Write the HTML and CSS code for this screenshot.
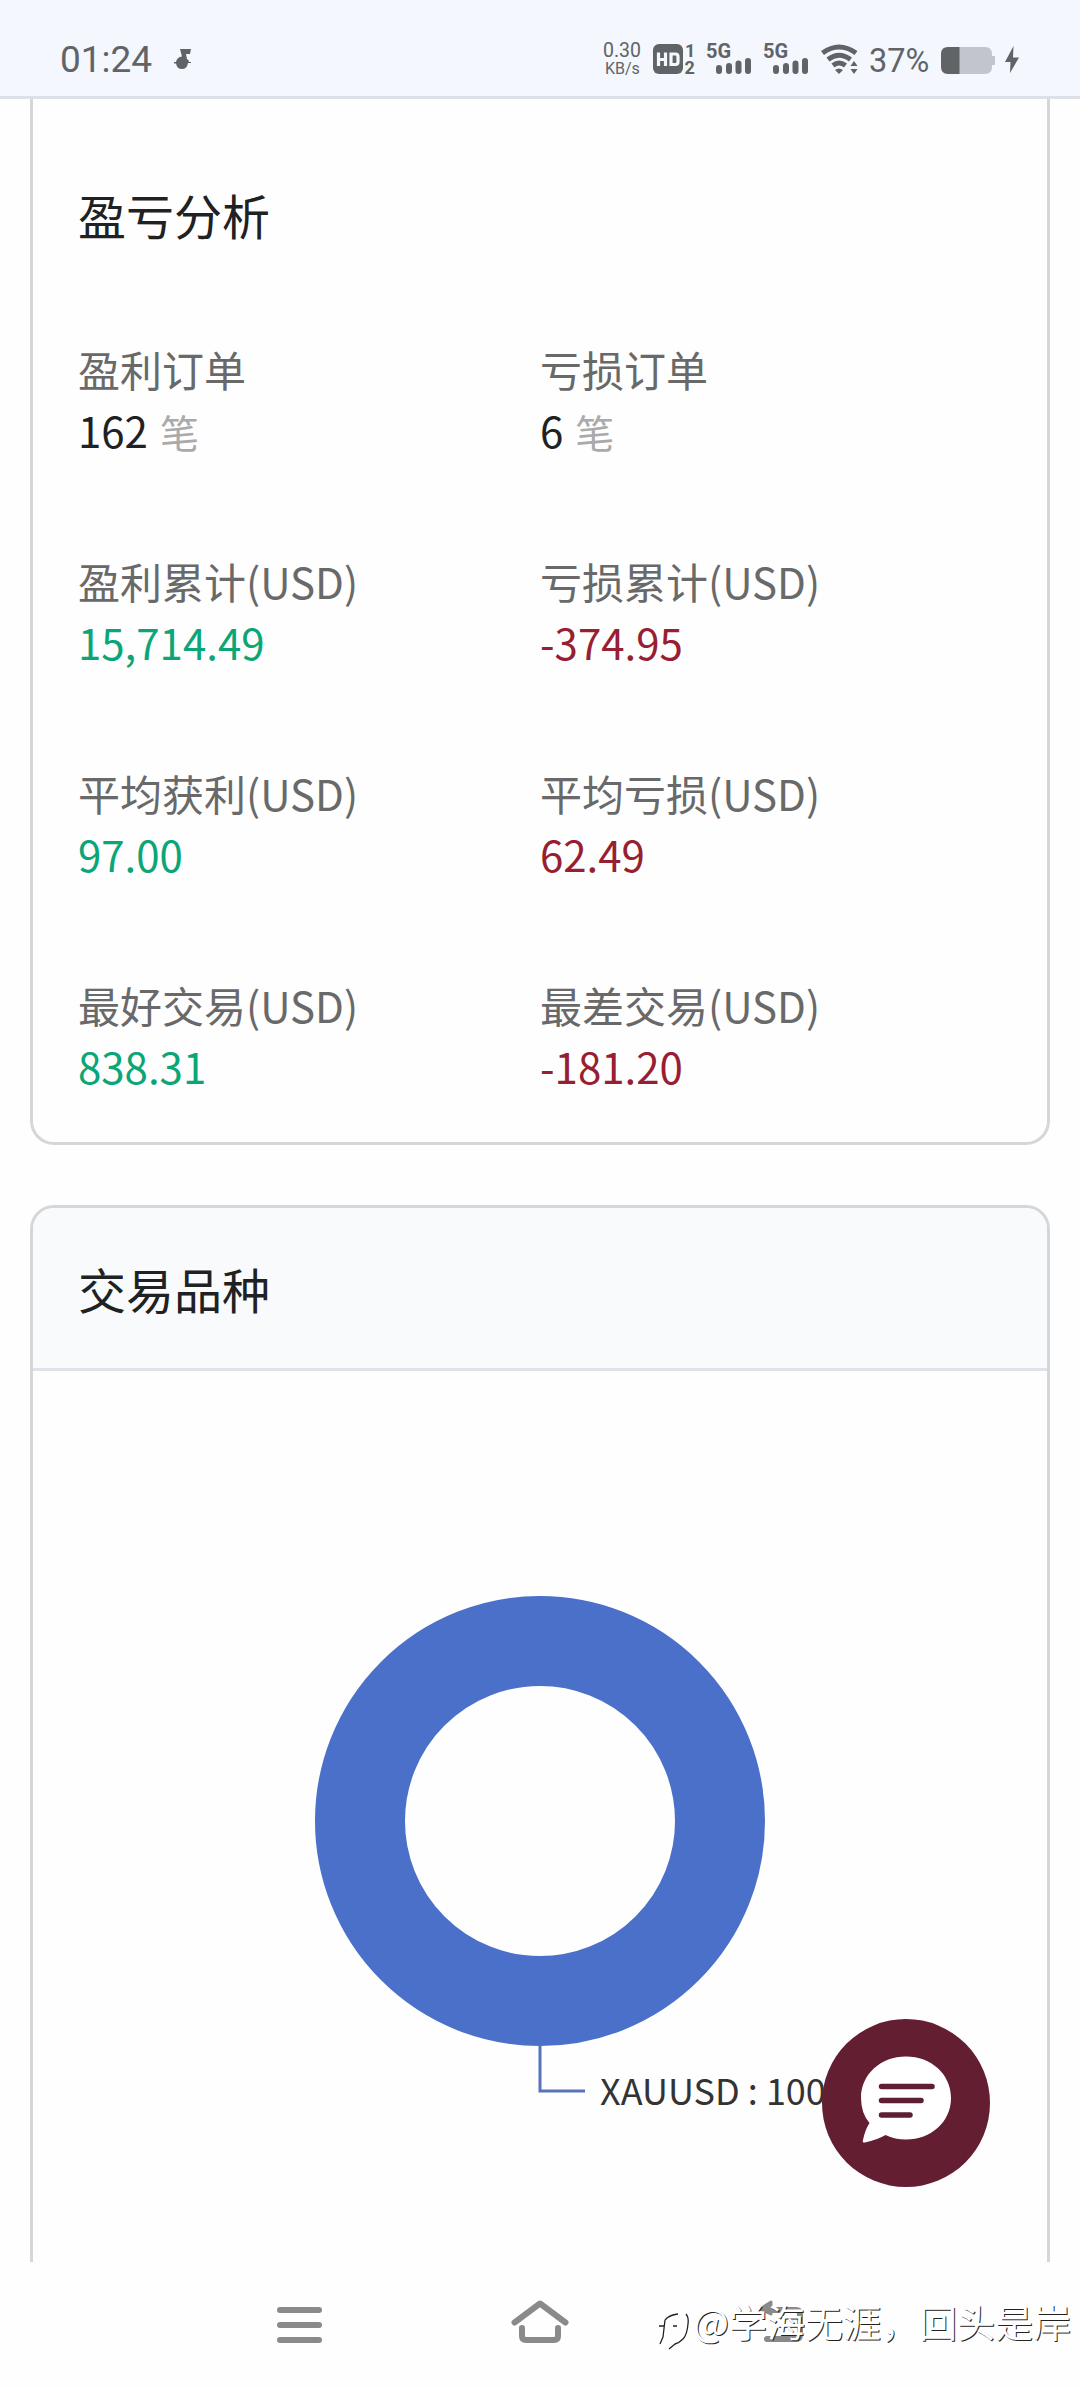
FILE: index.html
```html
<!DOCTYPE html>
<html lang="zh-CN">
<head>
<meta charset="utf-8">
<title>交易分析</title>
<link rel="stylesheet" href="styles.css">
</head>
<body>
<div class="screen">
  <header class="status">
    <span class="clock">01:24</span>
    <svg class="note" width="20" height="22" viewBox="0 0 20 22"><path d="M7 1H18L17 6H13L14 11Q16 12 16 14H18V15H15Q14 21 9 21Q4 21 3 15.500H1V14H3Q4 9 9 8.500Z"/></svg>
    <div class="indicators">
      <div class="speed"><span class="rate">0.30</span><span class="unit">KB/s</span></div>
      <svg class="hd" width="44" height="32" viewBox="0 0 44 32"><rect x="0" y="0" width="30" height="30" rx="6"/><path class="cut" d="M5.500 8.500V22M12.500 8.500V22M5.500 15.500H12.500M18 10H22.500Q25 10 25 12.500V18Q25 20.500 22.500 20.500H18Z"/><text x="32" y="12.500" class="sim">1</text><text x="31.500" y="30" class="sim">2</text></svg>
      <svg class="signal" width="46" height="32" viewBox="0 0 46 32"><text x="-1" y="14" class="net">5G</text><path d="M12 24V27M22 22V27M31.500 19.500V27M41 17V27" class="bars"/></svg>
      <svg class="signal" width="46" height="32" viewBox="0 0 46 32"><text x="-1" y="14" class="net">5G</text><path d="M12 24V27M22 22V27M31.500 19.500V27M41 17V27" class="bars"/></svg>
      <svg class="wifi" width="38" height="30" viewBox="0 0 38 30"><path d="M1.500 8Q18 -4 35 8M7 14.500Q18 6 29.500 14.500M12 20.500Q18 15.500 24.500 20.500" class="arc"/><path d="M14 25Q18 22 22 25L18 29ZM29.500 21L33 16L36.500 21ZM29.500 24H36.500L33 29Z"/></svg>
      <span class="percent">37%</span>
      <svg class="battery" width="54" height="28" viewBox="0 0 54 28"><path class="empty" d="M18 0H44Q51 0 51 7V9H54V18H51V20Q51 27 44 27H18Z"/><path d="M18.500 0H7Q0 0 0 7V20Q0 27 7 27H18.500Z"/></svg>
      <svg class="bolt" width="14" height="28" viewBox="0 0 14 28"><path d="M8.500 0L0 16H5.500L5 27L14 11.500H8Z"/></svg>
    </div>
  </header>

  <main class="page">
    <section class="card analysis">
      <h2 class="title">盈亏分析</h2>
      <dl class="stats">
        <div><dt>盈利订单</dt><dd>162<span class="count">笔</span></dd></div>
        <div><dt>亏损订单</dt><dd>6<span class="count">笔</span></dd></div>
        <div><dt>盈利累计(USD)</dt><dd class="gain">15,714.49</dd></div>
        <div><dt>亏损累计(USD)</dt><dd class="loss">-374.95</dd></div>
        <div><dt>平均获利(USD)</dt><dd class="gain">97.00</dd></div>
        <div><dt>平均亏损(USD)</dt><dd class="loss">62.49</dd></div>
        <div><dt>最好交易(USD)</dt><dd class="gain">838.31</dd></div>
        <div><dt>最差交易(USD)</dt><dd class="loss">-181.20</dd></div>
      </dl>
    </section>
    <section class="card symbols">
      <h2 class="title">交易品种</h2>
      <svg class="chart" width="1014" height="891" viewBox="0 0 1014 891">
        <circle cx="507" cy="450" r="180" class="ring"/>
        <path d="M507 675V720H552" class="leader"/>
        <text x="567" y="734" class="slice">XAUUSD : 100%</text>
      </svg>
    </section>
    <button class="chat" aria-label="客服">
      <svg width="168" height="168" viewBox="0 0 168 168"><path class="bubble" d="M84 37.500C109 37.500 129 55 129 79C129 103 109 120.500 84 120.500Q73 120.500 63.500 116Q55 121 43 123.500Q40 124 41 121Q43 111 47.500 104Q39 94 39 79C39 55 59 37.500 84 37.500Z"/><path class="lines" d="M59.500 67.500H110M59.500 81.500H99M59.500 96H88"/></svg>
    </button>
  </main>

  <nav class="navbar">
    <svg class="menu" width="45" height="36" viewBox="0 0 45 36"><path d="M3 3H42M3 18H42M3 33H42"/></svg>
    <svg class="home" width="58" height="44" viewBox="0 0 58 44"><path d="M3.500 22.500L29 3.500L54.500 22.500M11 28V36Q11 40 15 40H43Q47 40 47 36V28"/></svg>
    <svg class="back" width="46" height="44" viewBox="0 0 46 44"><path d="M8 39H37Q41 39 41 35V14Q41 10 37 10H8"/><path class="head" d="M1 9L12 2V14Z"/></svg>
    <div class="credit">
      <svg width="38" height="44" viewBox="0 0 38 44"><path class="light" d="M5 36Q9 30 9 16Q12 6 22 6Q31 6 31 17Q30 34 19 36L13 41"/><path class="shade" d="M10 13Q14 8 23 7M31 7Q34 11 33 17Q32 28 28 32Q24 36 20 37L14 42M4 19H9M10 13L8 30L5 37M18 19H22"/></svg>
      <span>@学海无涯，回头是岸</span>
    </div>
  </nav>
</div>
</body>
</html>
```
FILE: styles.css
```css
* { box-sizing: border-box; }
body { margin: 0; background: #fefefe; font-family: "Noto Sans CJK SC", sans-serif; color: #202122; }
h2, dl, dd { margin: 0; font-weight: 400; }
svg { display: block; flex: none; overflow: visible; }
.screen { width: 1080px; height: 2388px; display: flex; flex-direction: column; overflow: hidden; }

.status { flex: none; height: 99px; padding: 0 61px 0 60px; display: flex; align-items: flex-start; background: #f4f7fe; border-bottom: 3px solid #dce1e7; font-family: Roboto, sans-serif; color: #606466; fill: #606466; }
.clock { margin-top: 38px; font-size: 37px; line-height: 44px; width: 113px; }
.note { margin-top: 48px; }
.indicators { margin-left: auto; display: flex; }
.speed { width: 50px; margin-top: 40px; display: flex; flex-direction: column; }
.rate { font-size: 19.5px; line-height: 22px; }
.unit { font-size: 16px; line-height: 20px; margin-top: -3px; padding-left: 2px; }
.hd { margin: 44px 10px 0 0; }
.cut { fill: none; stroke: #f4f7fe; stroke-width: 3.2; }
.sim { font-size: 18px; font-weight: 700; }
.signal { margin: 44px 11px 0 0; }
.net { font-size: 20px; font-weight: 700; }
.bars { stroke: #606466; stroke-width: 6; stroke-linecap: round; }
.wifi { margin-top: 45px; }
.arc { fill: none; stroke: #606466; stroke-width: 5; }
.percent { margin: 42px 0 0 10px; width: 72px; font-size: 32.5px; line-height: 38px; }
.battery { margin-top: 47px; }
.empty { fill: #c2c5cd; }
.bolt { margin: 46px 0 0 10px; }

.page { flex: none; height: 2163px; padding: 0 30px; position: relative; overflow: hidden; }
.card { border: 3px solid #d4d7da; border-radius: 24px; overflow: hidden; }
.title { font-size: 48px; line-height: 72px; padding-left: 45px; }
.analysis { height: 1046px; border-top: 0; border-radius: 0 0 24px 24px; padding-top: 79px; }
.stats { display: grid; grid-template-columns: 462px 1fr; row-gap: 91px; padding: 89px 0 0 45px; font-size: 42px; line-height: 60px; }
dt { color: #696969; margin-bottom: 1px; }
.count { margin-left: 12px; font-size: 39px; line-height: 1; color: #aaa; }
.gain { color: #0ba677; }
.loss { color: #981e32; }
.symbols { margin-top: 60px; height: 1100px; }
.symbols .title { height: 163px; padding-top: 44px; background: #f8fafc; border-bottom: 3px solid #dfe3e9; }
.ring { fill: none; stroke: #4b70ca; stroke-width: 90; }
.leader { fill: none; stroke: #5774b8; stroke-width: 3; }
.slice { font-size: 36px; fill: #333; }
.chat { position: absolute; left: 822px; top: 1920px; width: 168px; height: 168px; padding: 0; border: 0; border-radius: 50%; background: #641e32; }
.bubble { fill: #fff; }
.lines { stroke: #5c1f33; stroke-width: 5.5; stroke-linecap: round; }

.navbar { flex: none; height: 126px; position: relative; display: flex; align-items: flex-start; padding: 38px 0 0 277px; fill: none; stroke: #8a8a8a; stroke-width: 6; stroke-linecap: round; stroke-linejoin: round; }
.menu { margin-top: 7px; }
.home { margin: 0 0 0 189px; }
.back { margin: 0 0 0 190px; }
.head { fill: #8a8a8a; stroke-width: 3; }
.credit { position: absolute; left: 655px; top: 32px; display: flex; font-size: 38px; line-height: 54px; color: #fff; white-space: nowrap; text-shadow: 1px 1px 0 #222; }
.credit svg { margin-top: 13px; }
.shade { stroke: #222; stroke-width: 1.3; stroke-linecap: butt; }
.light { stroke: #fff; stroke-width: 3; }
```
